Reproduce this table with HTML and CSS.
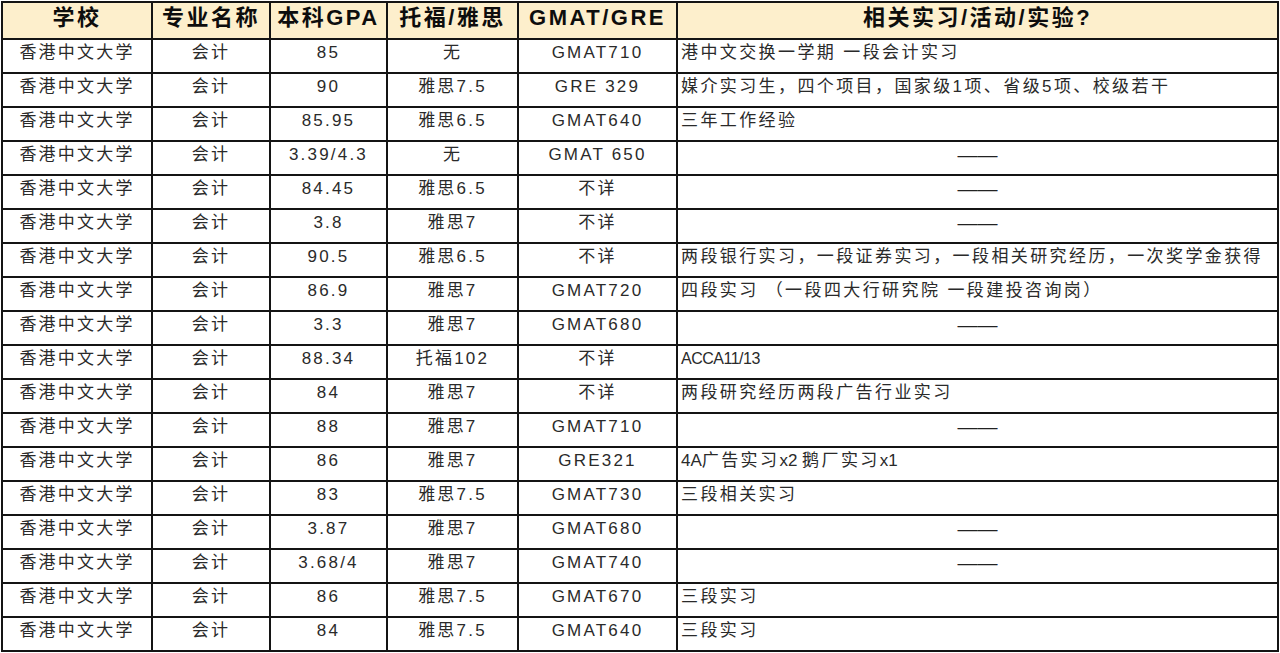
FILE: index.html
```html
<!DOCTYPE html>
<html lang="zh-CN">
<head>
<meta charset="utf-8">
<title>香港中文大学 会计 录取案例</title>
<link rel="stylesheet" href="styles.css">
</head>
<body>
<table class="grid">
  <colgroup>
    <col class="c1"><col class="c2"><col class="c3"><col class="c4"><col class="c5"><col class="c6">
  </colgroup>
  <thead>
    <tr><th>学校</th><th>专业名称</th><th>本科GPA</th><th>托福/雅思</th><th>GMAT/GRE</th><th>相关实习/活动/实验?</th></tr>
  </thead>
  <tbody>
    <tr><td>香港中文大学</td><td>会计</td><td>85</td><td>无</td><td>GMAT710</td><td class="exp">港中文交换一学期 一段会计实习</td></tr>
    <tr><td>香港中文大学</td><td>会计</td><td>90</td><td>雅思7.5</td><td>GRE 329</td><td class="exp">媒介实习生，四个项目，国家级1项、省级5项、校级若干</td></tr>
    <tr><td>香港中文大学</td><td>会计</td><td>85.95</td><td>雅思6.5</td><td>GMAT640</td><td class="exp">三年工作经验</td></tr>
    <tr><td>香港中文大学</td><td>会计</td><td>3.39/4.3</td><td>无</td><td>GMAT 650</td><td class="none">——</td></tr>
    <tr><td>香港中文大学</td><td>会计</td><td>84.45</td><td>雅思6.5</td><td>不详</td><td class="none">——</td></tr>
    <tr><td>香港中文大学</td><td>会计</td><td>3.8</td><td>雅思7</td><td>不详</td><td class="none">——</td></tr>
    <tr><td>香港中文大学</td><td>会计</td><td>90.5</td><td>雅思6.5</td><td>不详</td><td class="exp">两段银行实习，一段证券实习，一段相关研究经历，一次奖学金获得</td></tr>
    <tr><td>香港中文大学</td><td>会计</td><td>86.9</td><td>雅思7</td><td>GMAT720</td><td class="exp">四段实习 （一段四大行研究院 一段建投咨询岗）</td></tr>
    <tr><td>香港中文大学</td><td>会计</td><td>3.3</td><td>雅思7</td><td>GMAT680</td><td class="none">——</td></tr>
    <tr><td>香港中文大学</td><td>会计</td><td>88.34</td><td>托福102</td><td>不详</td><td class="exp"><span class="lat narrow">ACCA11/13</span></td></tr>
    <tr><td>香港中文大学</td><td>会计</td><td>84</td><td>雅思7</td><td>不详</td><td class="exp">两段研究经历两段广告行业实习</td></tr>
    <tr><td>香港中文大学</td><td>会计</td><td>88</td><td>雅思7</td><td>GMAT710</td><td class="none">——</td></tr>
    <tr><td>香港中文大学</td><td>会计</td><td>86</td><td>雅思7</td><td>GRE321</td><td class="exp"><span class="lat">4A</span>广告实习<span class="lat">x2 </span>鹅厂实习<span class="lat">x1</span></td></tr>
    <tr><td>香港中文大学</td><td>会计</td><td>83</td><td>雅思7.5</td><td>GMAT730</td><td class="exp">三段相关实习</td></tr>
    <tr><td>香港中文大学</td><td>会计</td><td>3.87</td><td>雅思7</td><td>GMAT680</td><td class="none">——</td></tr>
    <tr><td>香港中文大学</td><td>会计</td><td>3.68/4</td><td>雅思7</td><td>GMAT740</td><td class="none">——</td></tr>
    <tr><td>香港中文大学</td><td>会计</td><td>86</td><td>雅思7.5</td><td>GMAT670</td><td class="exp">三段实习</td></tr>
    <tr><td>香港中文大学</td><td>会计</td><td>84</td><td>雅思7.5</td><td>GMAT640</td><td class="exp">三段实习</td></tr>
  </tbody>
</table>
</body>
</html>
```

FILE: styles.css
```css
html, body {
  margin: 0;
  padding: 0;
  background: #ffffff;
}

body {
  font-family: "Liberation Sans", "Noto Sans CJK SC", sans-serif;
  color: #2a2a2a;
}

.grid {
  border-collapse: collapse;
  table-layout: fixed;
  width: 1278px;
  margin: 1px 0 0 1px;
}

.c1 { width: 150px; }
.c2 { width: 118px; }
.c3 { width: 117px; }
.c4 { width: 131px; }
.c5 { width: 159px; }
.c6 { width: auto; }

.grid th,
.grid td {
  border: 2px solid #141414;
  text-align: center;
  vertical-align: middle;
  white-space: nowrap;
  overflow: hidden;
}

.grid th {
  height: 29px;
  padding: 0 2px 6px;
  line-height: 24px;
  background: #fdefcc;
  color: #0d0d0d;
  font-size: 22px;
  font-weight: bold;
  letter-spacing: 2.5px;
}

.grid td {
  height: 25px;
  padding: 0 2px 7px;
  line-height: 20px;
  font-size: 17px;
  letter-spacing: 2.2px;
}

.grid td.exp {
  text-align: left;
  padding-left: 3px;
  letter-spacing: 2.4px;
}

.grid td.exp .lat {
  letter-spacing: 0;
}

.grid td.exp .narrow {
  font-size: 16px;
  letter-spacing: -0.5px;
}

.grid td.none {
  text-align: center;
  font-size: 20px;
  letter-spacing: 0;
  color: #222222;
}
```
